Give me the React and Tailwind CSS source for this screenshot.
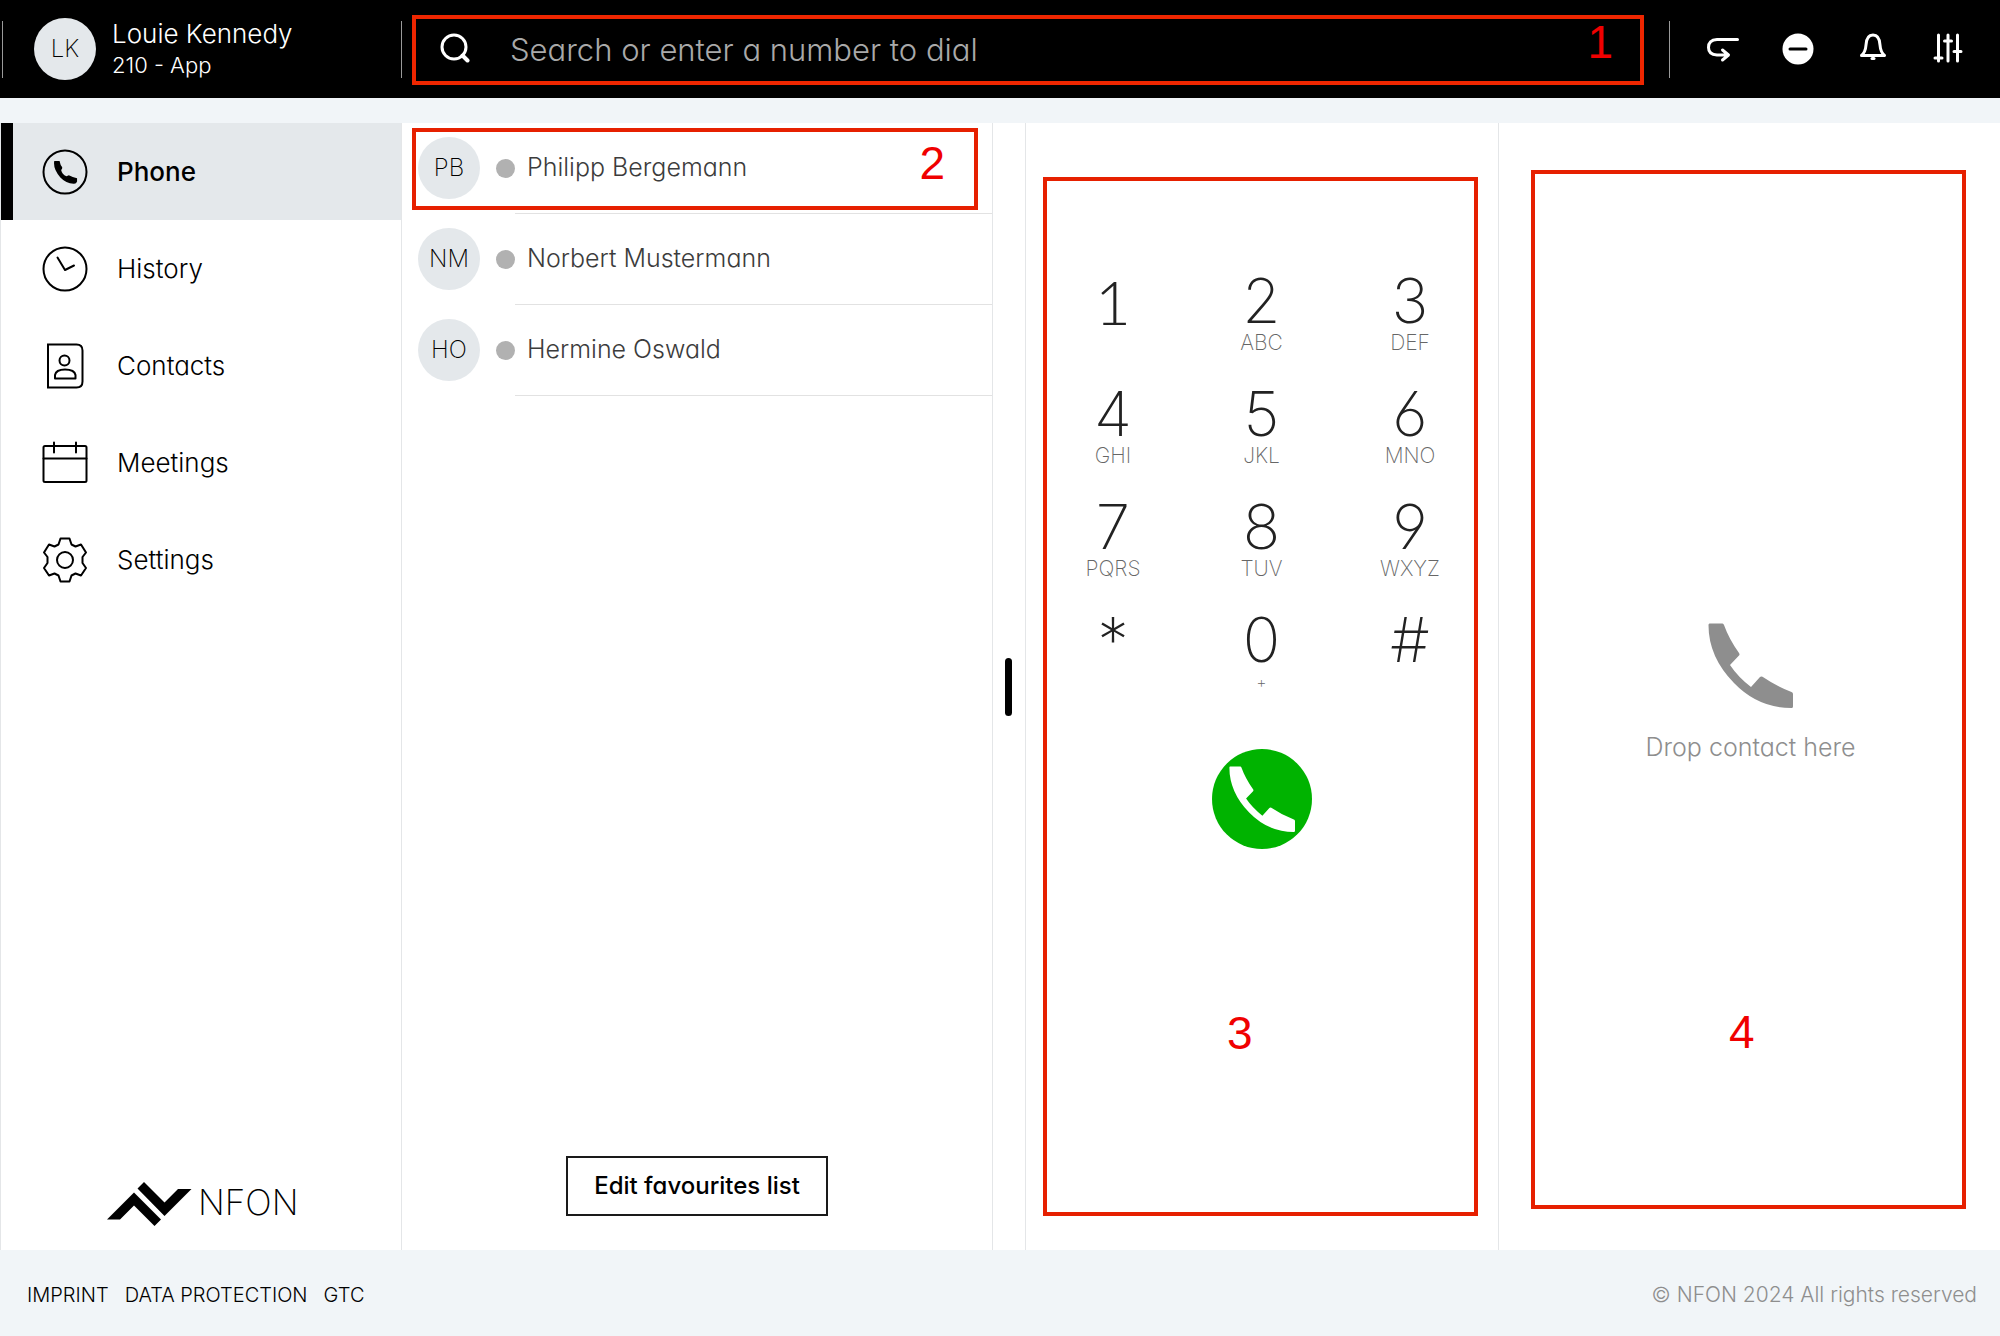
const PhoneShape = ({ className }) => (
  <svg viewBox="0 0 85 85" className={className} fill="currentColor" aria-hidden="true">
    <path d="M1.5 0.5H14.5Q15.5 0.5 16 2Q21 16 31 30Q32 31.500 31 32.500L22 42Q30 54 43 64L52 54Q53 53 54.500 53.800Q68 63 83.500 69Q85 69.600 85 71V83.500Q85 85 83.500 85Q50 85 26 60Q0.500 34 0.500 2Q0.500 0.500 1.500 0.500Z" />
  </svg>
);

const NavIcon = ({ name }) => {
  const common = {
    viewBox: "0 0 46 46",
    className: "size-[46px] shrink-0",
    fill: "none",
    stroke: "currentColor",
    strokeWidth: 2,
    strokeLinecap: "round",
    strokeLinejoin: "round",
    "aria-hidden": true,
  };
  if (name === "Phone")
    return (
      <svg {...common}>
        <circle cx="23" cy="23" r="21.500" />
        <g transform="translate(12 12) scale(0.265)" fill="currentColor" stroke="none">
          <path d="M1 0H21Q24 16 31 24Q32 30 27 34Q30 50 47 58L56 54Q70 62 87 65V77Q84 87 74 86Q45 84 24 62Q0 36 0 8Z" />
        </g>
      </svg>
    );
  if (name === "History")
    return (
      <svg {...common}>
        <circle cx="23" cy="23" r="21.500" />
        <path d="M15.500 11.500 23 24l9-4.500" />
      </svg>
    );
  if (name === "Contacts")
    return (
      <svg {...common}>
        <path d="M6 1.500H34.500Q40.500 1.500 40.500 7.500V38.500Q40.500 44.500 34.500 44.500H6Z" strokeLinejoin="miter" />
        <circle cx="22.500" cy="17.500" r="5" />
        <path d="M13 35.500V32Q14 26.500 23 26.500Q32.500 26.500 33.500 32V35.500Z" />
      </svg>
    );
  if (name === "Meetings")
    return (
      <svg {...common}>
        <rect x="1.500" y="6" width="43" height="36" rx="1.500" />
        <path d="M1.500 18.500H44.500M12 2.500V12.500M34 2.500V12.500" />
      </svg>
    );
  return (
    <svg {...common}>
      <path d="M18.500 1.500H27.500L29.500 7.500L33.500 9.500L39 7.500L44 15.500L40.500 20V26L44 31L39 38.500L33.500 36.500L29.500 38.500L27.500 44.500H18.500L16.500 38.500L12.500 36.500L7 38.500L2 31L5.500 26V20L2 15.500L7 7.500L12.500 9.500L16.500 7.500Z" />
      <circle cx="23" cy="23" r="8" />
    </svg>
  );
};

const Avatar = ({ children }) => (
  <span className="flex size-[62px] shrink-0 items-center justify-center rounded-full bg-[#e4e8eb] text-[24px] leading-none font-extralight text-black">
    {children}
  </span>
);

const NAV = ["Phone", "History", "Contacts", "Meetings", "Settings"];
const FAVOURITES = [
  ["PB", "Philipp Bergemann"],
  ["NM", "Norbert Mustermann"],
  ["HO", "Hermine Oswald"],
];
const KEYS = [
  ["1", ""],
  ["2", "ABC"],
  ["3", "DEF"],
  ["4", "GHI"],
  ["5", "JKL"],
  ["6", "MNO"],
  ["7", "PQRS"],
  ["8", "TUV"],
  ["9", "WXYZ"],
  ["*", ""],
  ["0", "+"],
  ["#", ""],
];

const Marker = ({ className, children }) => (
  <span className={`pointer-events-none absolute font-['Liberation_Sans',sans-serif] text-[46px] leading-none font-normal text-[#f00000] ${className}`}>
    {children}
  </span>
);

const HeaderButton = ({ label, children }) => (
  <button type="button" aria-label={label} className="flex size-8 items-center justify-center">
    <svg viewBox="0 0 32 32" className="size-8" fill="none" stroke="currentColor" strokeWidth="3" strokeLinecap="round" strokeLinejoin="round" aria-hidden="true">
      {children}
    </svg>
  </button>
);

function Header() {
  return (
    <header className="flex h-[98px] items-center bg-black text-white">
      <div className="ml-[2px] flex h-[57px] w-[400px] shrink-0 items-center border-x border-[#9a9a9a] pl-[31px]">
        <Avatar>LK</Avatar>
        <div className="ml-4 leading-none">
          <div className="text-[26px] leading-[32px] font-light">Louie Kennedy</div>
          <div className="text-[22px] leading-[30px] font-light">210 - App</div>
        </div>
      </div>
      <label className="relative mt-[2px] ml-[10px] flex h-[70px] min-w-0 flex-1 items-center border-4 border-[#ee2600]">
        <svg viewBox="0 0 30 30" className="mb-1 ml-[24px] size-[30px] shrink-0" fill="none" stroke="currentColor" strokeWidth="3" strokeLinecap="round" aria-hidden="true">
          <circle cx="14" cy="14" r="12" />
          <path d="M22.500 22.500 27.500 27.500" strokeWidth="4" />
        </svg>
        <input
          type="text"
          aria-label="Search or enter a number to dial"
          placeholder="Search or enter a number to dial"
          className="ml-[40px] min-w-0 flex-1 bg-transparent text-[31px] font-light outline-none placeholder:text-[#a9a9a9]"
        />
        <Marker className="top-0 right-[27px]">1</Marker>
      </label>
      <div className="ml-[25px] flex h-[57px] shrink-0 items-center gap-[43px] border-l border-[#9a9a9a] pr-[36px] pl-[37px]">
        <HeaderButton label="Call forwarding">
          <path d="M30.500 6.500H10Q1.500 7 1.500 14.500Q1.500 21.500 10 22H21M15.500 17 21.500 22 15.500 27" />
        </HeaderButton>
        <HeaderButton label="Do not disturb">
          <circle cx="16" cy="16" r="15.500" fill="white" stroke="none" />
          <path d="M8 16H24" stroke="black" />
        </HeaderButton>
        <HeaderButton label="Notifications">
          <path d="M4.500 22.500Q8.500 19 9 12Q9.500 2 16 2Q22.500 2 23 12Q23.500 19 27.500 22.500Z" />
          <path d="M15 25.500H17" />
        </HeaderButton>
        <HeaderButton label="Audio settings">
          <path d="M6.500 2V28M16 2V28M25.500 2V28M3 25H10M12.500 8H19.500M22 18.500H29" />
        </HeaderButton>
      </div>
    </header>
  );
}

function Sidebar() {
  return (
    <aside className="flex w-[402px] shrink-0 flex-col border-x border-[#e4e6e8]">
      <nav>
        <ul>
          {NAV.map((name) => (
            <li key={name}>
              <a
                href="#"
                aria-current={name === "Phone" ? "page" : undefined}
                className="flex h-[97px] items-center gap-[29px] border-l-[12px] border-transparent pl-[29px] text-[26px] font-light text-black aria-[current=page]:border-black aria-[current=page]:bg-[#e4e8eb] aria-[current=page]:font-medium"
              >
                <NavIcon name={name} />
                {name}
              </a>
            </li>
          ))}
        </ul>
      </nav>
      <div className="mt-auto mb-[24px] flex items-center gap-[6px] pl-[106px]">
        <svg viewBox="0 0 85 44" className="h-[44px] w-[85px]" fill="black" aria-hidden="true">
          <path d="M0 37.500 27 10.500 54 37.500 47.500 44 27 23.500 13 37.500Z" />
          <path d="M30.500 6.500 37 0 57.500 20.500 71 7H84.500L57.500 34Z" />
        </svg>
        <span className="pb-1 text-[35px] leading-none font-extralight">NFON</span>
      </div>
    </aside>
  );
}

function Favourites() {
  return (
    <section className="relative flex min-w-0 flex-1 flex-col border-r border-[#e4e6e8]">
      <ul>
        {FAVOURITES.map(([initials, name]) => (
          <li key={name} className="pl-4">
            <div className="flex h-[90px] items-center">
              <Avatar>{initials}</Avatar>
              <span className="ml-4 size-[19px] shrink-0 rounded-full bg-[#b1b1b1]" />
              <span className="ml-3 text-[25px] font-light text-[#3c3c3c]">{name}</span>
            </div>
            <hr className="ml-[97px] border-[#e2e2e2]" />
          </li>
        ))}
      </ul>
      <button type="button" className="mx-auto mt-auto mb-[34px] h-[60px] w-[262px] border-2 border-[#1a1a1a] text-[24px] font-medium text-black">
        Edit favourites list
      </button>
      <div className="pointer-events-none absolute top-[5px] right-[14px] left-[10px] h-[82px] border-4 border-[#e62000]">
        <Marker className="top-2 right-[29px]">2</Marker>
      </div>
    </section>
  );
}

function DialPad() {
  return (
    <section className="flex w-[473px] shrink-0 flex-col border-r border-[#e4e6e8] pt-[54px] pr-[20px] pb-[34px] pl-[17px]">
      <div className="relative flex flex-1 flex-col items-center border-4 border-[#e62000] pt-[90px] pl-[2px]">
        <div className="grid w-full grid-cols-[128px_128px_128px] justify-between">
          {KEYS.map(([digit, letters]) => (
            <button key={digit} type="button" className="flex h-[113px] flex-col items-center justify-start font-extralight">
              <span className="text-[62px] leading-[60px] text-[#222]">
                {digit === "1" ? <span className="font-['Lato',sans-serif] font-light">1</span> : digit}
              </span>
              <span className={letters === "+" ? "text-[16px] leading-[24px] text-[#666]" : "text-[21px] leading-[24px] text-[#666]"}>{letters}</span>
            </button>
          ))}
        </div>
        <button type="button" aria-label="Call" className="mt-[26px] flex size-[100px] items-center justify-center rounded-full bg-[#00b300] text-white">
          <PhoneShape className="size-[66px]" />
        </button>
        <Marker className="top-[829px] left-[180px]">3</Marker>
      </div>
    </section>
  );
}

function DropPanel() {
  return (
    <section className="flex w-[501px] shrink-0 flex-col pt-[47px] pr-[34px] pb-[41px] pl-[32px]">
      <div className="relative flex flex-1 flex-col items-center border-4 border-[#e62000] pt-[449px] pl-1">
        <PhoneShape className="size-[85px] text-[#8e8e8e]" />
        <p className="mt-[23px] text-[25px] leading-[32px] font-light text-[#8e8e8e]">Drop contact here</p>
        <Marker className="top-[835px] left-[194px]">4</Marker>
      </div>
    </section>
  );
}

export default function App() {
  return (
    <div className="flex min-h-screen flex-col bg-[#f1f5f8] font-['Inter',sans-serif] font-light [font-feature-settings:'cv11','cv03','cv04']">
      <Header />
      <main className="mt-[25px] flex flex-1 bg-white">
        <Sidebar />
        <Favourites />
        <div role="separator" aria-orientation="vertical" className="flex w-[33px] shrink-0 items-center justify-center border-r border-[#e4e6e8] pr-[2px]">
          <div className="h-[58px] w-[7px] rounded-full bg-black" />
        </div>
        <DialPad />
        <DropPanel />
      </main>
      <footer className="flex h-[86px] items-center justify-between pt-1 pr-[23px] pl-[27px] text-[21px]">
        <nav className="flex gap-4 text-[20px]">
          <a href="#">IMPRINT</a>
          <a href="#">DATA PROTECTION</a>
          <a href="#">GTC</a>
        </nav>
        <span className="text-[#8e8e8e]">© NFON 2024 All rights reserved</span>
      </footer>
    </div>
  );
}
